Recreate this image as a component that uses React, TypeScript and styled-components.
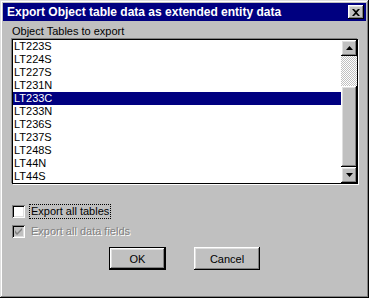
import styled, { createGlobalStyle } from 'styled-components';

const GlobalStyle = createGlobalStyle`
  html, body {
    margin: 0;
    padding: 0;
    background: #c0c0c0;
  }
  * {
    box-sizing: border-box;
  }
`;

const items = [
  'LT223S',
  'LT224S',
  'LT227S',
  'LT231N',
  'LT233C',
  'LT233N',
  'LT236S',
  'LT237S',
  'LT248S',
  'LT44N',
  'LT44S',
];

const Window = styled.div`
  width: 369px;
  height: 298px;
  padding: 3px;
  background: #c0c0c0;
  box-shadow: inset -1px -1px 0 #000, inset 1px 1px 0 #dfdfdf,
    inset -2px -2px 0 #808080, inset 2px 2px 0 #fff;
  display: flex;
  flex-direction: column;
  font-family: "Liberation Sans", Arial, sans-serif;
  font-size: 11px;
  color: #000;
`;

const TitleBar = styled.div`
  height: 18px;
  background: #000080;
  display: flex;
  align-items: center;
  justify-content: space-between;
  padding: 0 2px 0 4px;
`;

const Title = styled.span`
  color: #fff;
  font-weight: bold;
  font-size: 12px;
  white-space: nowrap;
`;

const RaisedBox = styled.div`
  background: #c0c0c0;
  box-shadow: inset -1px -1px 0 #000, inset 1px 1px 0 #fff,
    inset -2px -2px 0 #808080, inset 2px 2px 0 #dfdfdf;
  display: flex;
  align-items: center;
  justify-content: center;
`;

const CloseButton = styled(RaisedBox)`
  width: 16px;
  height: 14px;
`;

const Body = styled.div`
  flex: 1;
  padding: 4px 8px 0 9px;
  display: flex;
  flex-direction: column;
`;

const Label = styled.div`
  line-height: 13px;
  height: 13px;
  margin-bottom: 1px;
`;

const ListBox = styled.div`
  height: 145px;
  border: 1px solid #000;
  box-shadow: -1px -1px 0 #808080, 1px 1px 0 #fff;
  background: #fff;
  display: flex;
`;

const Rows = styled.div`
  flex: 1;
  display: flex;
  flex-direction: column;
`;

const Row = styled.div<{ $selected?: boolean }>`
  height: 13px;
  line-height: 13px;
  padding-left: 1px;
  background: ${(p) => (p.$selected ? '#000080' : 'transparent')};
  color: ${(p) => (p.$selected ? '#fff' : '#000')};
`;

const ScrollBar = styled.div`
  width: 16px;
  display: flex;
  flex-direction: column;
`;

const ArrowButton = styled(RaisedBox)`
  width: 16px;
  height: 16px;
`;

const Track = styled.div`
  height: 30px;
  background-color: #fff;
  background-image: linear-gradient(45deg, #c0c0c0 25%, transparent 25%, transparent 75%, #c0c0c0 75%),
    linear-gradient(45deg, #c0c0c0 25%, transparent 25%, transparent 75%, #c0c0c0 75%);
  background-size: 2px 2px;
  background-position: 0 0, 1px 1px;
`;

const Thumb = styled(RaisedBox)`
  flex: 1;
`;

const Options = styled.div`
  margin-top: 20px;
  display: flex;
  flex-direction: column;
  gap: 5px;
`;

const CheckRow = styled.div<{ $disabled?: boolean }>`
  height: 15px;
  display: flex;
  align-items: center;
  gap: 5px;
  color: ${(p) => (p.$disabled ? '#808080' : '#000')};
  text-shadow: ${(p) => (p.$disabled ? '1px 1px 0 #fff' : 'none')};
`;

const CheckBox = styled.div<{ $disabled?: boolean }>`
  width: 13px;
  height: 13px;
  background: ${(p) => (p.$disabled ? '#c0c0c0' : '#fff')};
  box-shadow: inset 1px 1px 0 #808080, inset -1px -1px 0 #fff,
    inset 2px 2px 0 #000, inset -2px -2px 0 #dfdfdf;
  display: flex;
  align-items: center;
  justify-content: center;
`;

const CheckText = styled.span<{ $focused?: boolean }>`
  line-height: 13px;
  padding: 0 1px;
  outline: ${(p) => (p.$focused ? '1px dotted #000' : 'none')};
`;

const Buttons = styled.div`
  margin-top: 8px;
  display: flex;
  justify-content: center;
  gap: 28px;
  padding-right: 1px;
`;

const PushButton = styled.button<{ $default?: boolean; $w: number }>`
  width: ${(p) => p.$w}px;
  height: 23px;
  padding: 0;
  border: ${(p) => (p.$default ? '1px solid #000' : 'none')};
  background: #c0c0c0;
  font-family: "Liberation Sans", Arial, sans-serif;
  font-size: 11px;
  color: #000;
  box-shadow: inset -1px -1px 0 #000, inset 1px 1px 0 #fff,
    inset -2px -2px 0 #808080, inset 2px 2px 0 #dfdfdf;
`;

export default function App() {
  return (
    <>
      <GlobalStyle />
      <Window>
        <TitleBar>
          <Title>Export Object table data as extended entity data</Title>
          <CloseButton>
            <svg width="8" height="7" viewBox="0 0 8 7">
              <path d="M0 0h2l2 2 2-2h2L5 3.5 8 7H6L4 5 2 7H0l3-3.5z" fill="#000" />
            </svg>
          </CloseButton>
        </TitleBar>
        <Body>
          <Label>Object Tables to export</Label>
          <ListBox>
            <Rows>
              {items.map((item) => (
                <Row key={item} $selected={item === 'LT233C'}>
                  {item}
                </Row>
              ))}
            </Rows>
            <ScrollBar>
              <ArrowButton>
                <svg width="7" height="4" viewBox="0 0 7 4">
                  <path d="M3.5 0L7 4H0z" fill="#000" />
                </svg>
              </ArrowButton>
              <Track />
              <Thumb />
              <ArrowButton>
                <svg width="7" height="4" viewBox="0 0 7 4">
                  <path d="M0 0h7L3.5 4z" fill="#000" />
                </svg>
              </ArrowButton>
            </ScrollBar>
          </ListBox>
          <Options>
            <CheckRow>
              <CheckBox />
              <CheckText $focused>Export all tables</CheckText>
            </CheckRow>
            <CheckRow $disabled>
              <CheckBox $disabled>
                <svg width="7" height="7" viewBox="0 0 7 7">
                  <path d="M0 2v3l2 2 5-5V-0L2 5z" fill="#808080" />
                </svg>
              </CheckBox>
              <CheckText>Export all data fields</CheckText>
            </CheckRow>
          </Options>
          <Buttons>
            <PushButton $default $w={57}>OK</PushButton>
            <PushButton $w={66}>Cancel</PushButton>
          </Buttons>
        </Body>
      </Window>
    </>
  );
}
